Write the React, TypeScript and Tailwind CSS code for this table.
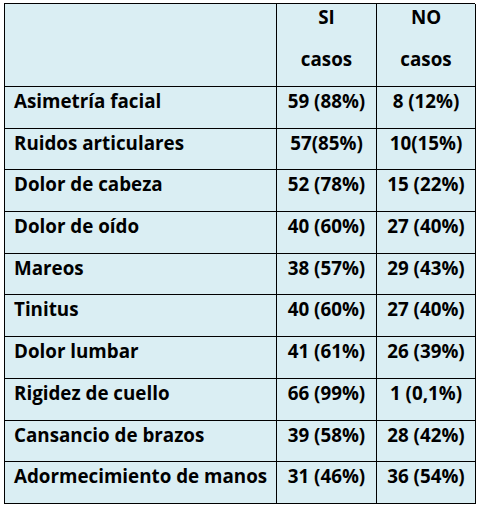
type Row = {
  label: string;
  yes: string;
  no: string;
};

const rows: Row[] = [
  { label: "Asimetría facial", yes: "59 (88%)", no: "8 (12%)" },
  { label: "Ruidos articulares", yes: "57(85%)", no: "10(15%)" },
  { label: "Dolor de cabeza", yes: "52 (78%)", no: "15 (22%)" },
  { label: "Dolor de oído", yes: "40 (60%)", no: "27 (40%)" },
  { label: "Mareos", yes: "38 (57%)", no: "29 (43%)" },
  { label: "Tinitus", yes: "40 (60%)", no: "27 (40%)" },
  { label: "Dolor lumbar", yes: "41 (61%)", no: "26 (39%)" },
  { label: "Rigidez de cuello", yes: "66 (99%)", no: "1 (0,1%)" },
  { label: "Cansancio de brazos", yes: "39 (58%)", no: "28 (42%)" },
  { label: "Adormecimiento de manos", yes: "31 (46%)", no: "36 (54%)" },
];

export default function App() {
  return (
    <div className="h-[512px] w-[480px] bg-white pl-[4px] pt-[3px] font-['Open_Sans','Liberation_Sans',sans-serif] font-bold text-[18.8px] text-black">
      <div className="grid w-[471px] grid-cols-[272px_100px_99px] border-l border-t border-black bg-[#daeef3]">
        <div className="h-[83px] border-b border-r border-black" />
        <div className="flex h-[83px] flex-col items-center border-b border-r border-black pt-[1px]">
          <span className="leading-[24px]">SI</span>
          <span className="mt-[18px] leading-[24px]">casos</span>
        </div>
        <div className="flex h-[83px] flex-col items-center border-b border-r border-black pt-[1px]">
          <span className="leading-[24px]">NO</span>
          <span className="mt-[18px] leading-[24px]">casos</span>
        </div>
        {rows.map((row) => (
          <div key={row.label} className="contents">
            <div className="h-[41.7px] border-b border-r border-black pl-[9px] pt-[2px] leading-[24px]">
              {row.label}
            </div>
            <div className="h-[41.7px] border-b border-r border-black pt-[2px] text-center leading-[24px]">
              {row.yes}
            </div>
            <div className="h-[41.7px] border-b border-r border-black pt-[2px] text-center leading-[24px]">
              {row.no}
            </div>
          </div>
        ))}
      </div>
    </div>
  );
}
